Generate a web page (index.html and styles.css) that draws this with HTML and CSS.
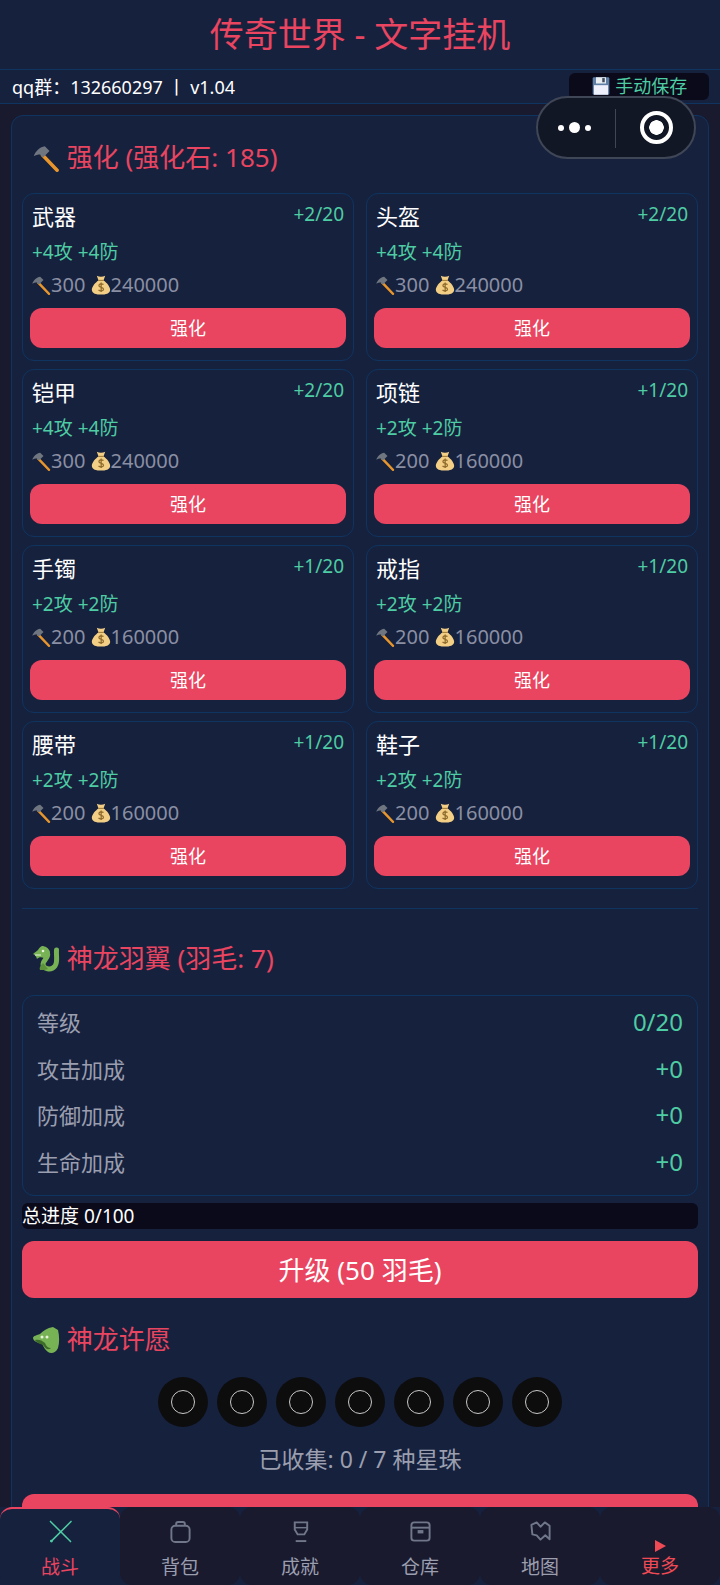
FILE: index.html
```html
<!DOCTYPE html>
<html lang="zh-CN">
<head>
    <meta charset="UTF-8">
    <meta name="viewport" content="width=device-width, initial-scale=1.0">
    <title>传奇世界 - 文字挂机</title>
    <link rel="stylesheet" href="styles.css">
</head>
<body>
    <svg class="defs" width="0" height="0">
        <symbol id="hammer" viewBox="0 0 24 24">
            <path d="M9 9.5 L21.5 22.5" stroke="#e8962c" stroke-width="3" stroke-linecap="round"/>
            <path d="M1.5 10.5 C3 6 7 2.5 11 2 L15 6 L9.5 11.5 L7 9 C5 9 3 9.5 1.5 10.5 Z" fill="#6f7680"/>
        </symbol>
        <symbol id="bag" viewBox="0 0 24 24">
            <path d="M7 1 C10 2.500 14 2.500 17 1 L15 6.500 C19 9 23 14 23 18 C22.500 22.500 18 23.500 12 23.500 C6 23.500 1.500 22.500 1 18 C1 14 5 9 9 6.500 Z" fill="#f3cf85"/>
            <path d="M8.5 6.5 H15.5" stroke="#a8823f" stroke-width="1.4"/>
            <path d="M15 11.5 C13 10 9.5 10.6 9.5 12.8 C9.5 15.4 15 14.4 15 17 C15 19.2 11 19.6 9 18 M12.2 9 V20.5" fill="none" stroke="#8d6a2c" stroke-width="1.5"/>
        </symbol>
        <symbol id="floppy" viewBox="0 0 24 24">
            <rect x="2" y="1.5" width="20" height="21" rx="1.5" fill="#5f7fa5"/>
            <rect x="6" y="1.5" width="12" height="7.5" fill="#e8edf2"/>
            <rect x="13.5" y="2.5" width="3" height="5" fill="#3f4b5c"/>
            <rect x="3.500" y="11" width="17" height="11.500" fill="#eef0fb"/>
        </symbol>
        <symbol id="dragon" viewBox="0 0 28 28">
            <path d="M15 8 C18 12 11 15 11 19 C11 24 19 26 23 21 C26 17 24 11 24.500 5" fill="none" stroke="#77b255" stroke-width="5" stroke-linecap="round"/>
            <path d="M11 18 C8 21 7 23 8 25 C11 25 14 25 16 24 Z" fill="#5c913b"/>
            <path d="M10 1 C13 1 17 3 18 7 C18 10 15 13 12 13 C9 12 7 12 5 14 C4 11 3 10 1 9 C3 7 5 6 6 5 C7 3 8 2 10 1 Z" fill="#77b255"/>
            <circle cx="11" cy="6" r="1.300" fill="#e8f3dc"/>
            <path d="M3 10 L9 10" stroke="#e8f3dc" stroke-width="1"/>
        </symbol>
        <symbol id="dragon-face" viewBox="0 0 28 28">
            <path d="M21 1 L26 4 C27.500 10 27.500 17 26 22 C24 27 19 28 16 26 C13 24 12 21 10 18 C6 17 1 15 1 12 C1 10 5 9 8 8 C11 5 15 2 21 1 Z" fill="#77b255"/>
            <path d="M3 14 C6 13 10 14 13 17 C14 20 16 22 19 22 C16 25 13 22 11 19 C7 18 4 16 3 14 Z" fill="#3d6b29"/>
            <circle cx="10" cy="11" r="1.500" fill="#e8f3dc"/>
            <circle cx="15" cy="11" r="1.500" fill="#e8f3dc"/>
        </symbol>
    </svg>

    <header class="page-title">传奇世界 - 文字挂机</header>

    <div class="info-bar">
        <span>qq群：132660297 丨 v1.04</span>
        <button class="save-btn"><svg class="emoji"><use href="#floppy"/></svg> 手动保存</button>
    </div>

    <main class="panel">
        <h2 class="section-title first"><svg class="emoji-lg"><use href="#hammer"/></svg> 强化 (强化石: 185)</h2>

        <div class="card-grid">
            <div class="card">
                <div class="card-head"><span class="card-name">武器</span><span class="card-level">+2/20</span></div>
                <div class="card-attr">+4攻 +4防</div>
                <div class="card-cost"><svg class="emoji"><use href="#hammer"/></svg>300 <svg class="emoji"><use href="#bag"/></svg>240000</div>
                <button class="btn">强化</button>
            </div>
            <div class="card">
                <div class="card-head"><span class="card-name">头盔</span><span class="card-level">+2/20</span></div>
                <div class="card-attr">+4攻 +4防</div>
                <div class="card-cost"><svg class="emoji"><use href="#hammer"/></svg>300 <svg class="emoji"><use href="#bag"/></svg>240000</div>
                <button class="btn">强化</button>
            </div>
            <div class="card">
                <div class="card-head"><span class="card-name">铠甲</span><span class="card-level">+2/20</span></div>
                <div class="card-attr">+4攻 +4防</div>
                <div class="card-cost"><svg class="emoji"><use href="#hammer"/></svg>300 <svg class="emoji"><use href="#bag"/></svg>240000</div>
                <button class="btn">强化</button>
            </div>
            <div class="card">
                <div class="card-head"><span class="card-name">项链</span><span class="card-level">+1/20</span></div>
                <div class="card-attr">+2攻 +2防</div>
                <div class="card-cost"><svg class="emoji"><use href="#hammer"/></svg>200 <svg class="emoji"><use href="#bag"/></svg>160000</div>
                <button class="btn">强化</button>
            </div>
            <div class="card">
                <div class="card-head"><span class="card-name">手镯</span><span class="card-level">+1/20</span></div>
                <div class="card-attr">+2攻 +2防</div>
                <div class="card-cost"><svg class="emoji"><use href="#hammer"/></svg>200 <svg class="emoji"><use href="#bag"/></svg>160000</div>
                <button class="btn">强化</button>
            </div>
            <div class="card">
                <div class="card-head"><span class="card-name">戒指</span><span class="card-level">+1/20</span></div>
                <div class="card-attr">+2攻 +2防</div>
                <div class="card-cost"><svg class="emoji"><use href="#hammer"/></svg>200 <svg class="emoji"><use href="#bag"/></svg>160000</div>
                <button class="btn">强化</button>
            </div>
            <div class="card">
                <div class="card-head"><span class="card-name">腰带</span><span class="card-level">+1/20</span></div>
                <div class="card-attr">+2攻 +2防</div>
                <div class="card-cost"><svg class="emoji"><use href="#hammer"/></svg>200 <svg class="emoji"><use href="#bag"/></svg>160000</div>
                <button class="btn">强化</button>
            </div>
            <div class="card">
                <div class="card-head"><span class="card-name">鞋子</span><span class="card-level">+1/20</span></div>
                <div class="card-attr">+2攻 +2防</div>
                <div class="card-cost"><svg class="emoji"><use href="#hammer"/></svg>200 <svg class="emoji"><use href="#bag"/></svg>160000</div>
                <button class="btn">强化</button>
            </div>
        </div>

        <hr class="divider">

        <h2 class="section-title wing"><svg class="emoji-lg"><use href="#dragon"/></svg> 神龙羽翼 (羽毛: 7)</h2>

        <div class="stat-box">
            <div class="stat-row"><span>等级</span><span class="stat-value">0/20</span></div>
            <div class="stat-row"><span>攻击加成</span><span class="stat-value">+0</span></div>
            <div class="stat-row"><span>防御加成</span><span class="stat-value">+0</span></div>
            <div class="stat-row"><span>生命加成</span><span class="stat-value">+0</span></div>
        </div>

        <div class="progress">总进度 0/100</div>
        <button class="btn btn-large">升级 (50 羽毛)</button>

        <h2 class="section-title wish"><svg class="emoji-lg"><use href="#dragon-face"/></svg> 神龙许愿</h2>

        <div class="orbs">
            <div class="orb"><i></i></div>
            <div class="orb"><i></i></div>
            <div class="orb"><i></i></div>
            <div class="orb"><i></i></div>
            <div class="orb"><i></i></div>
            <div class="orb"><i></i></div>
            <div class="orb"><i></i></div>
        </div>
        <p class="orb-count">已收集: 0 / 7 种星珠</p>
        <button class="btn btn-large btn-wish">许愿</button>
    </main>

    <!-- mini program capsule -->
    <div class="capsule">
        <div class="capsule-dots"><i></i><i class="big"></i><i></i></div>
        <div class="capsule-line"></div>
        <div class="capsule-ring"></div>
    </div>

    <nav class="tabbar">
        <div class="tab active">
            <svg class="tab-icon" viewBox="0 0 24 24" fill="none" stroke="#4ecca3" stroke-width="1.6" stroke-linecap="round"><path d="M2.500 22 L23 1.500"/><path d="M1.500 1.500 L22.500 22.500"/><circle cx="2.500" cy="22" r="1.500" fill="#4ecca3" stroke="none"/></svg>
            <span>战斗</span>
        </div>
        <div class="tab">
            <svg class="tab-icon" viewBox="0 0 24 24" fill="none" stroke="#70778a" stroke-width="2"><rect x="2.500" y="6" width="19" height="17" rx="4"/><path d="M7.500 6 V4 Q7.500 2 9.500 2 H14.500 Q16.500 2 16.500 4 V6"/></svg>
            <span>背包</span>
        </div>
        <div class="tab">
            <svg class="tab-icon" viewBox="0 0 24 24" fill="none" stroke="#70778a" stroke-width="2"><path d="M6 2.500 H19 V10 L16 15 H9 L6 10 Z"/><path d="M6 8 H19" stroke-width="1.500"/><path d="M7 22 H18"/></svg>
            <span>成就</span>
        </div>
        <div class="tab">
            <svg class="tab-icon" viewBox="0 0 24 24" fill="none" stroke="#70778a" stroke-width="2"><rect x="2.500" y="2.500" width="19" height="19" rx="3"/><path d="M2.500 8 H21.500"/><rect x="9" y="10.500" width="6" height="3.500" fill="#70778a" stroke="none"/></svg>
            <span>仓库</span>
        </div>
        <div class="tab">
            <svg class="tab-icon" viewBox="0 0 24 24" fill="none" stroke="#70778a" stroke-width="2" stroke-linejoin="round"><path d="M2.500 5 L8 2.500 L12 7 L16.500 2.500 L21.500 6 V20 L17 16 L12 20.500 L8 16 L3.500 15 Z"/></svg>
            <span>地图</span>
        </div>
        <div class="tab more">
            <i class="more-arrow"></i>
            <span>更多</span>
        </div>
    </nav>
</body>
</html>
```

FILE: styles.css
```css
* {
    box-sizing: border-box;
}
html, body {
    height: 100%;
}
body {
    margin: 0;
    height: 1585px;
    overflow: hidden;
    background-color: #1a1a2e;
    color: #fff;
    font-family: "Noto Sans", "Noto Sans CJK SC", sans-serif;
}
.defs {
    position: absolute;
}
.emoji {
    width: 20px;
    height: 20px;
    vertical-align: -3px;
}
.emoji-lg {
    width: 28px;
    height: 28px;
    vertical-align: -5px;
}
button {
    font-family: inherit;
    border: none;
}

.page-title {
    height: 69px;
    background-color: #16213e;
    color: #e94560;
    font-size: 34px;
    line-height: 68px;
    text-align: center;
}
.info-bar {
    height: 35px;
    display: flex;
    justify-content: space-between;
    align-items: center;
    padding: 0 12px;
    background-color: #16213e;
    border-top: 1px solid #0f3460;
    border-bottom: 1px solid #0f3460;
    font-size: 18px;
    line-height: 30px;
}
.save-btn {
    width: 140px;
    height: 27px;
    margin-right: -1px;
    padding: 0;
    background-color: #0a0a1a;
    color: #4ecca3;
    border-radius: 6px;
    font-size: 18px;
    line-height: 27px;
}

.panel {
    margin: 11px 11px 0;
    padding: 15px 10px 10px;
    background-color: #16213e;
    border: 1px solid #0f3460;
    border-radius: 12px;
}
.section-title {
    margin: 0;
    padding-left: 10px;
    height: 62px;
    color: #e94560;
    font-size: 26px;
    font-weight: 400;
    line-height: 52px;
}
.section-title.wing {
    height: 66px;
    line-height: 58px;
}

.card-grid {
    display: grid;
    grid-template-columns: 1fr 1fr;
    gap: 8px 12px;
}
.card {
    height: 168px;
    padding: 7px;
    border: 1px solid #0f3460;
    border-radius: 12px;
}
.card-head {
    display: flex;
    justify-content: space-between;
    height: 36px;
    padding: 0 2px;
}
.card-name {
    font-size: 22px;
    line-height: 30px;
}
.card-level {
    color: #4ecca3;
    font-size: 19px;
    line-height: 26px;
}
.card-attr {
    height: 32px;
    padding-left: 2px;
    color: #4ecca3;
    font-size: 19px;
    line-height: 30px;
}
.card-cost {
    height: 32px;
    padding-left: 1px;
    color: #8a8fa3;
    font-size: 20px;
    line-height: 32px;
}
.btn {
    display: block;
    width: 100%;
    height: 40px;
    margin-top: 7px;
    padding: 0 0 2px;
    background-color: #e94560;
    color: #fff;
    border-radius: 12px;
    font-size: 18px;
}
.btn-large {
    height: 57px;
    margin-top: 12px;
    font-size: 26px;
}
.btn-wish {
    margin-top: 18px;
}

.divider {
    margin: 19px 0 20px;
    border: none;
    border-top: 1px solid #0f3460;
}

.stat-box {
    height: 201px;
    padding: 7px 14px 0;
    border: 1px solid #0f3460;
    border-radius: 12px;
}
.stat-row {
    display: flex;
    justify-content: space-between;
    height: 46.500px;
    color: #9a9eae;
    font-size: 22px;
    line-height: 38px;
}
.stat-value {
    color: #4ecca3;
    font-size: 24px;
}
.progress {
    height: 26px;
    margin-top: 7px;
    background-color: #0a0a1a;
    border-radius: 6px;
    font-size: 19px;
    line-height: 26px;
}
.section-title.wish {
    height: 60px;
    margin-top: 15px;
}
.orbs {
    display: flex;
    justify-content: center;
    gap: 9px;
    margin-top: 4px;
}
.orb {
    width: 50px;
    height: 50px;
    display: flex;
    justify-content: center;
    align-items: center;
    background-color: #0d0d0d;
    border-radius: 50%;
}
.orb i {
    width: 24px;
    height: 24px;
    border: 1px solid #c8c8c8;
    border-radius: 50%;
}
.orb-count {
    margin: 15px 0 0;
    color: #9a9eae;
    font-size: 23px;
    line-height: 34px;
    text-align: center;
}

/* overlays */
.capsule {
    position: fixed;
    top: 96px;
    left: 536px;
    width: 160px;
    height: 63px;
    background-color: #121726;
    border: 2px solid #3f4656;
    border-radius: 32px;
}
.capsule-dots {
    position: absolute;
    top: 0;
    left: 20px;
    height: 59px;
    display: flex;
    align-items: center;
    gap: 5px;
}
.capsule-dots i {
    width: 6px;
    height: 6px;
    background-color: #fff;
    border-radius: 50%;
}
.capsule-dots i.big {
    width: 11px;
    height: 11px;
}
.capsule-line {
    position: absolute;
    top: 11px;
    left: 77px;
    width: 1px;
    height: 39px;
    background-color: #3f4656;
}
.capsule-ring {
    position: absolute;
    top: 13px;
    left: 102px;
    width: 33px;
    height: 33px;
    border: 4px solid #fff;
    border-radius: 50%;
    background: radial-gradient(circle, #fff 0 7px, transparent 7.500px);
}

.tabbar {
    position: fixed;
    left: 0;
    right: 0;
    bottom: 0;
    height: 78px;
    display: flex;
    background-color: #16213e;
}
.tab {
    flex: 1;
    display: flex;
    flex-direction: column;
    align-items: center;
    padding-top: 13px;
    background-color: #1a1a2e;
    border-radius: 12px;
    color: #9a9eae;
    font-size: 19px;
}
.tab span {
    line-height: 28px;
}
.tab.active {
    background-color: #16213e;
    border-top: 2px solid #e94560;
    padding-top: 11px;
    color: #e94560;
}
.tab.more {
    color: #f04a55;
}
.tab-icon {
    width: 23px;
    height: 23px;
    margin-bottom: 10px;
}
.more-arrow {
    width: 0;
    height: 0;
    margin: 20px 0 0;
    border-left: 11px solid #f04a55;
    border-top: 6.500px solid transparent;
    border-bottom: 6.500px solid transparent;
}
```
